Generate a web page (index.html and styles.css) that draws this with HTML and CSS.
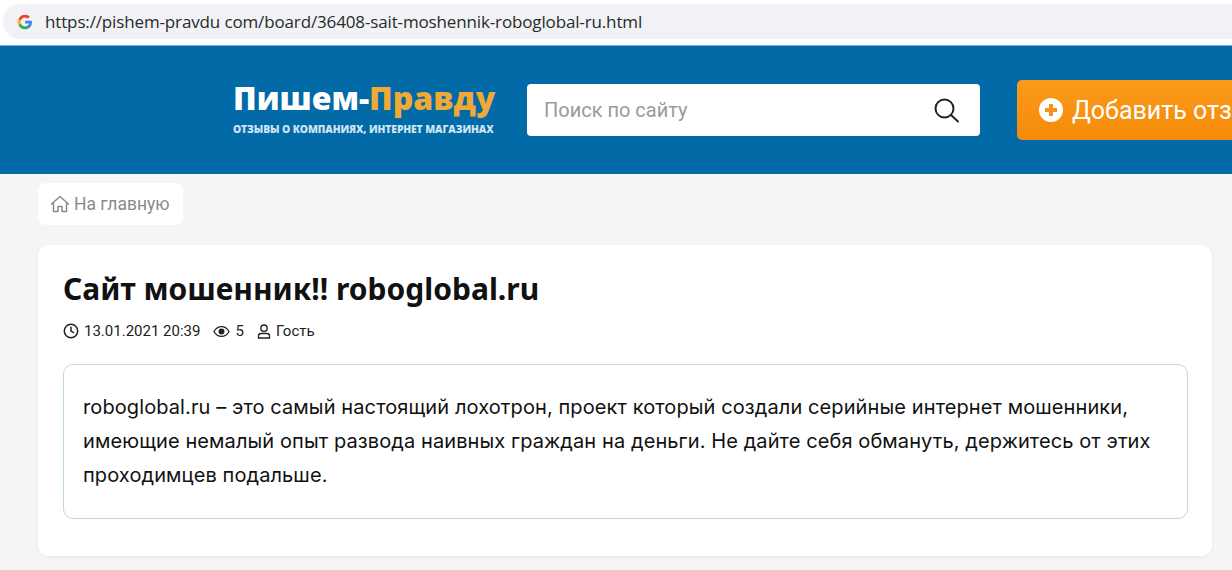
FILE: index.html
```html
<!DOCTYPE html>
<html>
<head>
  <title>Сайт мошенник!! roboglobal.ru</title>
  <link rel="stylesheet" href="styles.css">
</head>
<body>
  <div class="browser-bar">
    <div class="address">
      <svg class="g-logo" width="16" height="16" viewBox="0 0 48 48">
        <path fill="#4285F4" d="M45 24.5c0-1.6-.1-3.1-.4-4.5H24v8.5h11.8c-.5 2.7-2 5-4.4 6.6v5.5h7.1C42.700 36.700 45 31.100 45 24.500z"/>
        <path fill="#34A853" d="M24 46c5.900 0 10.900-2 14.500-5.300l-7.100-5.500c-2 1.300-4.500 2.100-7.400 2.100-5.700 0-10.500-3.800-12.200-9H4.500v5.700C8.100 41.100 15.500 46 24 46z"/>
        <path fill="#FBBC05" d="M11.800 28.300c-.4-1.300-.7-2.700-.7-4.300s.3-3 .7-4.300V14H4.500C3 17 2 20.400 2 24s1 7 2.500 10z"/>
        <path fill="#EA4335" d="M24 10.700c3.200 0 6.100 1.100 8.400 3.300l6.300-6.300C34.900 4.200 29.900 2 24 2 15.500 2 8.100 6.900 4.500 14l7.300 5.700c1.700-5.200 6.500-9 12.200-9z"/>
      </svg>
      <span class="url">https://pishem-pravdu com/board/36408-sait-moshennik-roboglobal-ru.html</span>
    </div>
  </div>

  <header class="header">
    <div class="logo">
      <div class="logo-name">Пишем-<span class="logo-accent">Правду</span></div>
      <div class="logo-sub">ОТЗЫВЫ О КОМПАНИЯХ, ИНТЕРНЕТ МАГАЗИНАХ</div>
    </div>
    <div class="search">
      <span class="search-text">Поиск по сайту</span>
      <svg width="28" height="28" viewBox="0 0 28 28" fill="none" stroke="#222" stroke-width="2">
        <circle cx="12.500" cy="12.500" r="9"/>
        <path d="M19 19l7 6.500" stroke-linecap="round"/>
      </svg>
    </div>
    <div class="add-btn">
      <svg width="24" height="24" viewBox="0 0 24 24">
        <circle cx="12" cy="12" r="12" fill="#fff"/>
        <path d="M12 6v12M6 12h12" stroke="#f7931a" stroke-width="4"/>
      </svg>
      <span>Добавить отз</span>
    </div>
  </header>

  <main class="content">
    <a class="crumb">
      <svg width="20" height="18" viewBox="0 0 20 18" fill="none" stroke="#8a8a8a" stroke-width="1.500" stroke-linejoin="round">
        <path d="M1 9.500L10 1.500l9 8M3.500 8v8.500h4.500v-5h4v5h4.500V8"/>
      </svg>
      <span>На главную</span>
    </a>

    <article class="card">
      <h1 class="title">Сайт мошенник!! roboglobal.ru</h1>
      <div class="meta">
        <span class="meta-item">
          <svg width="16" height="16" viewBox="0 0 16 16" fill="none" stroke="#222" stroke-width="1.500">
            <circle cx="8" cy="8" r="6.700"/>
            <path d="M8 3.800V8l3 2"/>
          </svg>
          13.01.2021 20:39
        </span>
        <span class="meta-item">
          <svg width="17" height="13" viewBox="0 0 18 13" fill="none" stroke="#222" stroke-width="1.300">
            <path d="M1 6.500C3 3 5.700 1.300 9 1.300S15 3 17 6.500C15 10 12.300 11.700 9 11.700S3 10 1 6.500z"/>
            <circle cx="9" cy="6.500" r="2.500" fill="#222"/>
          </svg>
          5
        </span>
        <span class="meta-item">
          <svg width="14" height="15" viewBox="0 0 14 15" fill="none" stroke="#222" stroke-width="1.300">
            <circle cx="7" cy="4.200" r="3.200"/>
            <path d="M1.500 14v-2c0-1.500 1-2.500 2.500-2.500h6c1.500 0 2.500 1 2.500 2.500v2z"/>
          </svg>
          Гость
        </span>
      </div>
      <div class="story">
        <p>roboglobal.ru – это самый настоящий лохотрон, проект который создали серийные интернет мошенники, имеющие немалый опыт развода наивных граждан на деньги. Не дайте себя обмануть, держитесь от этих проходимцев подальше.</p>
      </div>
    </article>
  </main>
</body>
</html>
```

FILE: styles.css
```css
body {
  margin: 0;
  height: 570px;
  overflow: hidden;
  background-color: #f5f5f5;
  font-family: Roboto, "Liberation Sans", sans-serif;
  color: #111;
}
.browser-bar {
  height: 45px;
  box-sizing: border-box;
  padding-top: 4px;
  background-color: #fff;
}
.address {
  display: flex;
  align-items: center;
  height: 35px;
  margin-left: 3px;
  padding-left: 14px;
  border-radius: 17px 0 0 17px;
  background-color: #f0f2f5;
}
.g-logo {
  margin-right: 12px;
}
.url {
  font-family: "Open Sans", sans-serif;
  font-size: 17px;
  letter-spacing: -0.14px;
  color: #2a2a2a;
}
.header {
  display: flex;
  align-items: center;
  height: 129px;
  padding-left: 233px;
  background-color: #026aa7;
  border-top: 1px solid #7fb2d3;
  box-sizing: border-box;
  overflow: hidden;
}
.logo {
  width: 294px;
  flex-shrink: 0;
  padding-bottom: 4px;
}
.logo-name {
  font-family: "Open Sans", sans-serif;
  font-size: 32px;
  font-weight: 800;
  line-height: 36px;
  color: #fff;
}
.logo-accent {
  color: #f0a836;
}
.logo-sub {
  font-family: "Open Sans", sans-serif;
  font-size: 10.300px;
  font-weight: 800;
  letter-spacing: -0.1px;
  margin-top: 6px;
  color: #cfe4f2;
  white-space: nowrap;
}
.search {
  display: flex;
  align-items: center;
  justify-content: space-between;
  width: 453px;
  height: 52px;
  flex-shrink: 0;
  box-sizing: border-box;
  padding: 0 20px 0 17px;
  background-color: #fff;
  border-radius: 4px;
}
.search-text {
  font-size: 20px;
  color: #9a9a9a;
}
.add-btn {
  display: flex;
  align-items: center;
  gap: 9px;
  height: 60px;
  width: 300px;
  flex-shrink: 0;
  margin-left: 37px;
  padding-left: 22px;
  background: linear-gradient(#fb9a1a, #f58a0a);
  border-radius: 5px;
  font-size: 25px;
  color: #fff;
  white-space: nowrap;
}
.content {
  padding: 9px 20px 0 38px;
}
.crumb {
  display: inline-flex;
  align-items: center;
  gap: 4px;
  height: 42px;
  padding: 0 13px 0 12px;
  background-color: #fff;
  border-radius: 8px;
  font-size: 17.500px;
  color: #8a8a8a;
}
.card {
  margin-top: 20px;
  padding: 24px 25px 37px;
  height: 311px;
  box-sizing: border-box;
  background-color: #fff;
  border-radius: 10px;
  box-shadow: 0 1px 4px rgba(0, 0, 0, 0.05);
}
.title {
  margin: 0;
  font-family: "Noto Sans", sans-serif;
  font-size: 30px;
  font-weight: 700;
  line-height: 40px;
  color: #111;
}
.meta {
  display: flex;
  gap: 13px;
  margin-top: 13px;
  font-size: 15px;
  color: #222;
}
.meta-item {
  display: inline-flex;
  align-items: center;
  gap: 5px;
}
.story {
  margin-top: 24px;
  height: 155px;
  box-sizing: border-box;
  padding: 25px 19px 0;
  margin-right: -1px;
  border: 1px solid #bcd8e2;
  border-radius: 10px;
}
.story p {
  margin: 0;
  font-family: Inter, sans-serif;
  font-size: 20px;
  letter-spacing: 0.1px;
  line-height: 34px;
  color: #111;
}
```
